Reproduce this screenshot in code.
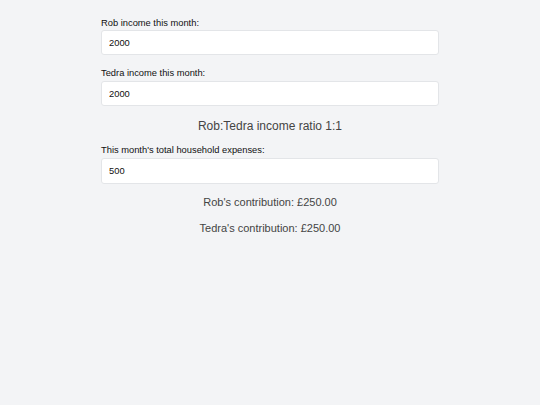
import React, { useState } from "react";

export default function App() {
  const [rob, setRob] = useState("2000");
  const [tedra, setTedra] = useState("2000");
  const [exp, setExp] = useState("500");
  const r = parseFloat(rob) || 0;
  const t = parseFloat(tedra) || 0;
  const e = parseFloat(exp) || 0;
  const total = r + t;
  const robC = total ? (e * r) / total : 0;
  const tedC = total ? (e * t) / total : 0;
  const font = { fontFamily: '"Liberation Sans", Arial, sans-serif' };
  const inputCls =
    "block w-full h-[25px] bg-white border border-[#e3e5e8] rounded-[3px] px-[7px] text-[9.33px] text-[#111] outline-none";
  return (
    <div className="min-h-[405px] w-full bg-[#f3f4f6]" style={font}>
      <div className="w-[338px] mx-auto pt-[16px]">
        <label className="block text-[9.33px] leading-[14px] text-[#111]">Rob income this month:</label>
        <input className={inputCls} value={rob} onChange={(ev) => setRob(ev.target.value)} />
        <label className="block mt-[11px] text-[9.33px] leading-[14px] text-[#111]">Tedra income this month:</label>
        <input className={`${inputCls} mt-[1px]`} value={tedra} onChange={(ev) => setTedra(ev.target.value)} />
        <p className="mt-[11px] text-center text-[12px] leading-[18px] text-[#444]">Rob:Tedra income ratio 1:1</p>
        <label className="block mt-[8px] text-[9.33px] leading-[14px] text-[#111]">This month's total household expenses:</label>
        <input className={`${inputCls} mt-[1px] h-[26px]`} value={exp} onChange={(ev) => setExp(ev.target.value)} />
        <p className="mt-[10px] text-center text-[11px] leading-[16px] text-[#444]">Rob's contribution: £{robC.toFixed(2)}</p>
        <p className="mt-[10px] text-center text-[11px] leading-[16px] text-[#444]">Tedra's contribution: £{tedC.toFixed(2)}</p>
      </div>
    </div>
  );
}
